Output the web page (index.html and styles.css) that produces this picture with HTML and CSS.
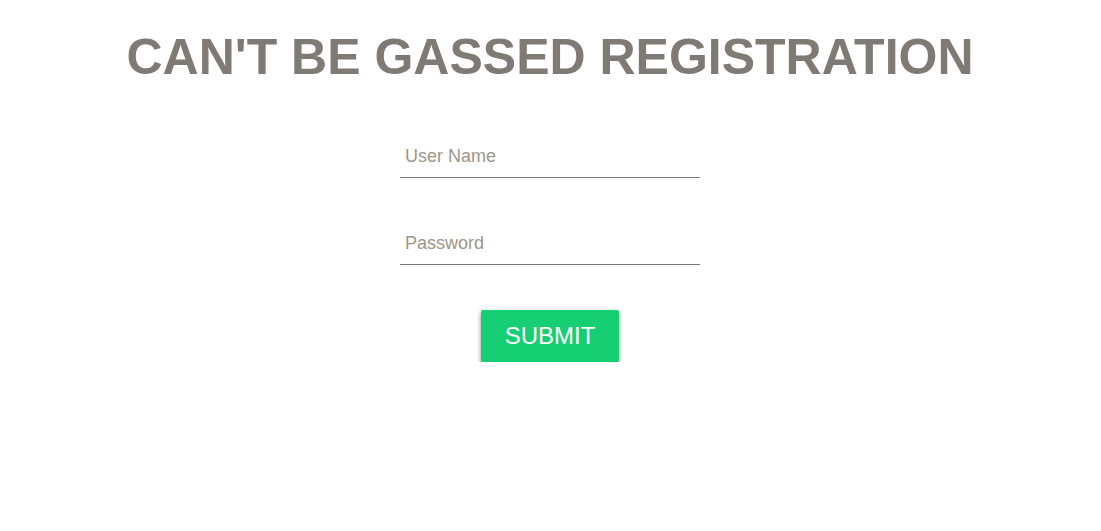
FILE: index.html
```html
<!DOCTYPE html>
<html>
<head>
<meta charset="utf-8">
<link rel="stylesheet" href="styles.css">
</head>
<body>
<h1 class="title">CAN'T BE GASSED REGISTRATION</h1>
<form class="form">
  <input class="field" type="text" placeholder="User Name">
  <input class="field" type="password" placeholder="Password">
  <button class="submit" type="button">SUBMIT</button>
</form>
</body>
</html>
```
FILE: styles.css
```css
html, body {
  margin: 0;
  padding: 0;
  background: #fff;
  font-family: "Liberation Sans", Arial, sans-serif;
}
body {
  padding-right: 1px;
}
.title {
  margin: 0;
  padding-top: 28px;
  font-size: 50px;
  line-height: 58px;
  font-weight: bold;
  color: #7f7b74;
  text-align: center;
}
.form {
  margin-top: 60px;
  display: flex;
  flex-direction: column;
  align-items: center;
}
.field {
  box-sizing: content-box;
  width: 290px;
  height: 21px;
  padding: 0 5px 10px;
  border: none;
  border-bottom: 1px solid #7a7a7a;
  outline: none;
  background: transparent;
  font-family: "Liberation Sans", Arial, sans-serif;
  font-size: 18px;
  color: #555;
}
.field::placeholder {
  color: #9d968b;
}
.field + .field {
  margin-top: 55px;
}
.submit {
  margin-top: 45px;
  height: 52px;
  width: 138px;
  border: none;
  border-radius: 2px;
  background: #17cf73;
  color: #fff;
  font-family: "Liberation Sans", Arial, sans-serif;
  font-size: 24px;
  box-shadow: 0 2px 4px rgba(0, 0, 0, 0.5);
  cursor: pointer;
}
```
